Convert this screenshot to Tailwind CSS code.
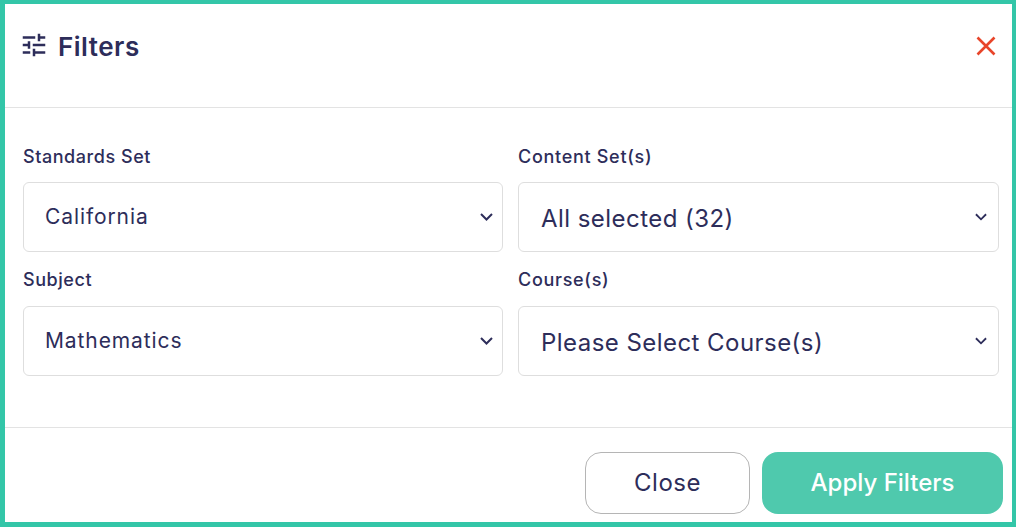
<!DOCTYPE html>
<html lang="en">
<head>
  <meta charset="UTF-8">
  <title>Filters</title>
  <script src="https://cdn.jsdelivr.net/npm/@tailwindcss/browser@4"></script>
</head>
<body class="bg-white font-['Inter','Open_Sans',sans-serif] text-[#2d2d5a]">

  <div class="w-[1016px] h-[527px] border-4 border-l-[5px] border-b-[5px] border-[#33c6a8] flex flex-col overflow-hidden">
    <!-- header -->
    <div class="h-[104px] shrink-0 border-b border-[#e3e3e3] flex justify-between pl-[14px] pr-[15px] pt-[26px]">
      <div class="flex items-start gap-[9px]">
        <svg class="w-[30px] h-[30px] text-[#2d2d5a]" viewBox="0 0 24 24" fill="currentColor"><path d="M3 17v2h6v-2H3zM3 5v2h10V5H3zm10 16v-2h8v-2h-8v-2h-2v6h2zM7 9v2H3v2h4v2h2V9H7zm14 4v-2H11v2h10zm-6-4h2V7h4V5h-4V3h-2v6z"/></svg>
        <h1 class="text-[26px] leading-[34px] font-semibold tracking-[0.5px]">Filters</h1>
      </div>
      <svg class="w-[22px] h-[22px] mt-[5px]" viewBox="0 0 22 22" fill="none" stroke="#e8452a" stroke-width="2.6"><path d="M2.5 2.5l17 17M19.5 2.5l-17 17"/></svg>
    </div>

    <!-- fields -->
    <div class="h-[320px] shrink-0 border-b border-[#e3e3e3] pl-[18px] pr-[13px] pt-[36px]">
      <div class="grid grid-cols-[480px_481px] gap-x-[15px]">
        <div>
          <label class="block h-[38px] text-[18px] leading-[26px] font-medium tracking-[0.55px]">Standards Set</label>
          <button class="w-full h-[70px] border border-[#dedede] rounded-[6px] flex items-center justify-between pl-[21px] pr-[9px] text-[21px] tracking-[0.9px]">
            California
            <svg class="w-[13px] h-[8px]" viewBox="0 0 13 8" fill="none" stroke="#2d2d5a" stroke-width="2"><path d="M1 1l5.5 5.5L12 1"/></svg>
          </button>
        </div>
        <div>
          <label class="block h-[38px] text-[18px] leading-[26px] font-medium tracking-[0.7px]">Content Set(s)</label>
          <button class="w-full h-[70px] border border-[#dedede] rounded-[6px] flex items-center justify-between pl-[22px] pr-[11px] text-[24px] tracking-[0.45px]">
            <span class="pt-[3px]">All selected (32)</span>
            <svg class="w-[12px] h-[8px]" viewBox="0 0 13 8" fill="none" stroke="#2d2d5a" stroke-width="2"><path d="M1 1l5.5 5.5L12 1"/></svg>
          </button>
        </div>
        <div class="mt-[15px]">
          <label class="block h-[39px] text-[18px] leading-[26px] font-medium tracking-[0.55px]">Subject</label>
          <button class="w-full h-[70px] border border-[#dedede] rounded-[6px] flex items-center justify-between pl-[21px] pr-[9px] text-[21px] tracking-[0.9px]">
            Mathematics
            <svg class="w-[13px] h-[8px]" viewBox="0 0 13 8" fill="none" stroke="#2d2d5a" stroke-width="2"><path d="M1 1l5.5 5.5L12 1"/></svg>
          </button>
        </div>
        <div class="mt-[15px]">
          <label class="block h-[39px] text-[18px] leading-[26px] font-medium tracking-[0.7px]">Course(s)</label>
          <button class="w-full h-[70px] border border-[#dedede] rounded-[6px] flex items-center justify-between pl-[22px] pr-[11px] text-[24px] tracking-[0.45px]">
            <span class="pt-[3px]">Please Select Course(s)</span>
            <svg class="w-[12px] h-[8px]" viewBox="0 0 13 8" fill="none" stroke="#2d2d5a" stroke-width="2"><path d="M1 1l5.5 5.5L12 1"/></svg>
          </button>
        </div>
      </div>
    </div>

    <!-- footer -->
    <div class="flex justify-end gap-[12px] pt-[24px] pr-[9px]">
      <button class="w-[165px] h-[62px] border border-[#b5b5b5] rounded-[16px] text-[24px] tracking-[0.5px]">Close</button>
      <button class="w-[241px] h-[62px] rounded-[16px] bg-[#4fc9ad] text-white text-[24px] font-medium">Apply Filters</button>
    </div>
  </div>

</body>
</html>
